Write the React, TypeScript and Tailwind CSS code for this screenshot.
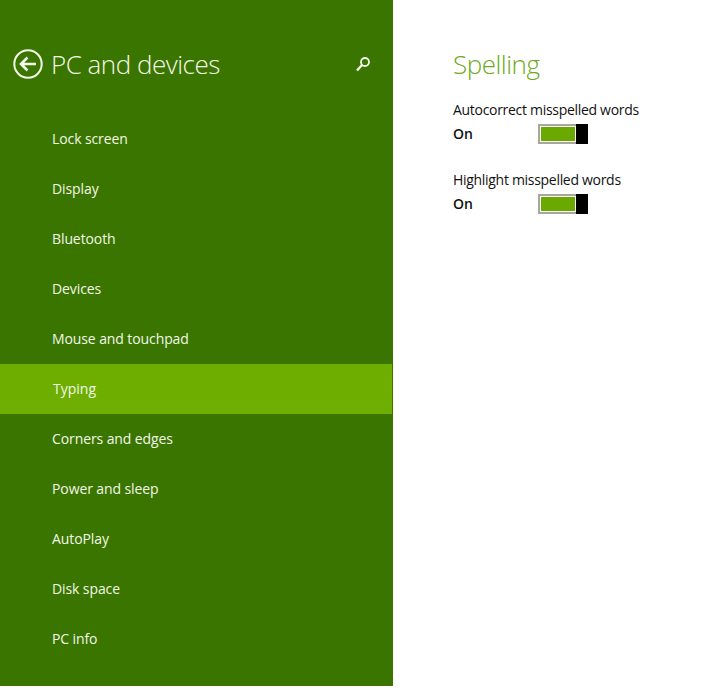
const items = [
  "Lock screen",
  "Display",
  "Bluetooth",
  "Devices",
  "Mouse and touchpad",
  "Typing",
  "Corners and edges",
  "Power and sleep",
  "AutoPlay",
  "Disk space",
  "PC info",
];

function Toggle() {
  return (
    <div className="flex h-[20px] w-[50px] ml-[65px]">
      <div className="flex-1 border-2 border-[#a8a89a] border-r-0 p-px bg-white">
        <div className="h-full bg-[#6aaa00]" />
      </div>
      <div className="w-[12px] bg-black" />
    </div>
  );
}

function Setting({ label }: { label: string }) {
  return (
    <div className="h-[70px]">
      <div className="h-[24px] text-[14px] tracking-[-0.3px] leading-[24px] text-[#111]">{label}</div>
      <div className="flex items-center h-[24px]">
        <span className="w-[20px] pb-[2px] text-[14px] font-semibold text-[#111]">On</span>
        <Toggle />
      </div>
    </div>
  );
}

export default function App() {
  return (
    <div
      className="flex w-[726px] h-[688px] bg-white overflow-hidden"
      style={{ fontFamily: '"Open Sans", "Noto Sans", sans-serif' }}
    >
      <aside className="w-[393px] h-[686px] bg-[#3a7500] text-[#f2f8e8]">
        <header className="flex items-center h-[114px] pl-[13px] pr-[22px] pt-[15px]">
          <svg width="30" height="30" viewBox="0 0 30 30" fill="none" stroke="#f4f9ec" className="mb-[2px]">
            <circle cx="15" cy="15" r="13.7" strokeWidth="2" />
            <path d="M8 15H23M14.5 8.5L8 15L14.5 21.5" strokeWidth="2.6" />
          </svg>
          <h1 className="ml-[8px] mb-[2px] flex-1 text-[26px] tracking-[-0.5px] font-light leading-none">PC and devices</h1>
          <svg width="16" height="16" viewBox="0 0 16 16" fill="none" stroke="#f4f9ec" className="mb-[2px]">
            <circle cx="10" cy="6" r="4" strokeWidth="1.8" />
            <path d="M7 9L2 14.5" strokeWidth="2.4" />
          </svg>
        </header>
        <nav>
          {items.map((item) => (
            <div
              key={item}
              className={
                item === "Typing"
                  ? "flex items-center h-[50px] w-[392px] pl-[53px] pb-[2px] text-[14px] bg-[#6dae00]"
                  : "flex items-center h-[50px] pl-[52px] pb-[2px] text-[14px] tracking-[-0.1px]"
              }
            >
              {item}
            </div>
          ))}
        </nav>
      </aside>
      <main className="pl-[60px] pt-[46px]">
        <h2 className="h-[52px] text-[26px] tracking-[-0.5px] font-light leading-[36px] text-[#6fa91c]">Spelling</h2>
        <Setting label="Autocorrect misspelled words" />
        <Setting label="Highlight misspelled words" />
      </main>
    </div>
  );
}
